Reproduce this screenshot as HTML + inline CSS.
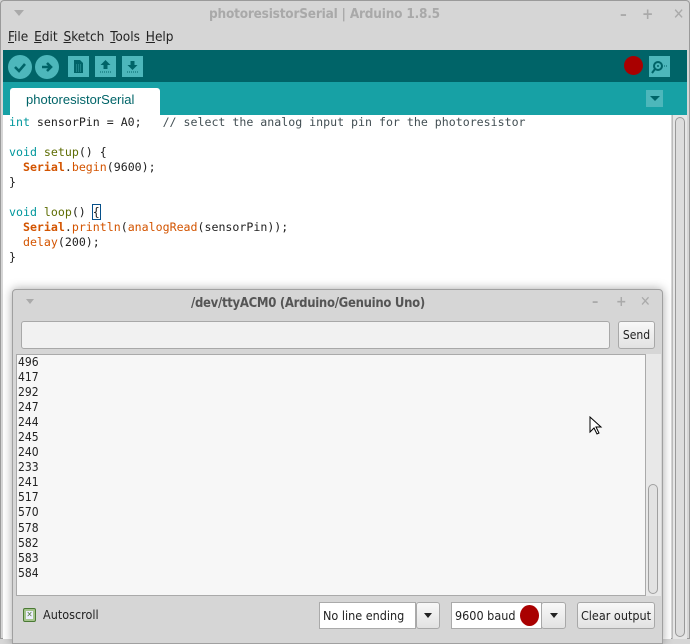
<!DOCTYPE html>
<html><head><meta charset="utf-8"><style>
*{margin:0;padding:0;box-sizing:border-box}
body{width:690px;height:639px;overflow:hidden;background:#d6d6d6;font-family:"DejaVu Sans Condensed","DejaVu Sans","Liberation Sans",sans-serif;position:relative}
.abs{position:absolute}
.mono{font-family:"DejaVu Sans Mono","Liberation Mono",monospace;font-size:11.6px;white-space:pre;color:#222}
.k{color:#00979c}.f{color:#5e6d03}.o{color:#d35400}.b{color:#d35400;font-weight:bold}.c{color:#434f54}
.btn{background:linear-gradient(#f8f8f8,#e2e2e2);border:1px solid #a8a8a8;border-radius:3px}
.tb{background:#4db7bb;}
</style></head><body>
<div class="abs" style="left:0;top:0;width:690px;height:639px;border:1px solid #9a9a9a;border-radius:4px 4px 0 0;"></div>
<div class="abs" style="left:14px;top:10px;width:0;height:0;border-left:5px solid transparent;border-right:5px solid transparent;border-top:6px solid #aaa"></div>
<div class="abs" style="left:209px;top:6px;font-size:13.5px;font-weight:bold;color:#a9a9a9;white-space:nowrap;letter-spacing:-0.2px">photoresistorSerial | Arduino 1.8.5</div>
<div class="abs" style="left:620px;top:5px;font-size:15px;color:#aaa;font-weight:bold">–</div>
<div class="abs" style="left:642px;top:5px;font-size:15px;color:#aaa;font-weight:bold">+</div>
<div class="abs" style="left:673px;top:5px;font-size:15px;color:#aaa;font-weight:bold">✕</div>
<div class="abs" style="left:8px;top:29px;font-size:13.5px;color:#222;word-spacing:2px;white-space:nowrap"><u>F</u>ile <u>E</u>dit <u>S</u>ketch <u>T</u>ools <u>H</u>elp</div>
<div class="abs" style="left:3px;top:50px;width:684px;height:32px;background:#006468"></div>
<div class="abs tb" style="left:8px;top:55px;width:24px;height:24px;border-radius:50%"></div>
<svg class="abs" style="left:8px;top:55px" width="24" height="24"><path d="M7 12l4 4 6-7" stroke="#006468" stroke-width="2.6" fill="none"/></svg>
<div class="abs tb" style="left:35px;top:55px;width:24px;height:24px;border-radius:50%"></div>
<svg class="abs" style="left:35px;top:55px" width="24" height="24"><path d="M7 12h8M12 8l4 4-4 4" stroke="#006468" stroke-width="2.6" fill="none"/></svg>
<div class="abs tb" style="left:68px;top:56px;width:21px;height:21px"></div>
<svg class="abs" style="left:68px;top:56px" width="21" height="21"><path d="M6 4h6l3 3v10H6z" fill="#006468"/><path d="M8 9h6M8 11h6M8 13h6M8 15h6" stroke="#4db7bb" stroke-width="0.8" stroke-dasharray="1 1"/></svg>
<div class="abs tb" style="left:95px;top:56px;width:21px;height:21px"></div>
<svg class="abs" style="left:95px;top:56px" width="21" height="21"><path d="M10.5 4l-5 5h3v4h4V9h3z" fill="#006468"/><path d="M5 16h11" stroke="#006468" stroke-dasharray="1 1"/></svg>
<div class="abs tb" style="left:122px;top:56px;width:21px;height:21px"></div>
<svg class="abs" style="left:122px;top:56px" width="21" height="21"><path d="M10.5 14l-5-5h3V5h4v4h3z" fill="#006468"/><path d="M5 16h11" stroke="#006468" stroke-dasharray="1 1"/></svg>
<div class="abs" style="left:624px;top:56px;width:19px;height:19px;border-radius:50%;background:#a90000"></div>
<div class="abs tb" style="left:649px;top:56px;width:21px;height:21px"></div>
<svg class="abs" style="left:649px;top:56px" width="21" height="21"><circle cx="9" cy="10" r="4" stroke="#006468" stroke-width="2" fill="none"/><path d="M6 13l-3 4" stroke="#006468" stroke-width="2"/><circle cx="9" cy="10" r="1" fill="#006468"/><path d="M15 10h3" stroke="#006468" stroke-dasharray="1 1"/></svg>
<div class="abs" style="left:3px;top:82px;width:684px;height:33px;background:#17a1a5"></div>
<div class="abs" style="left:10px;top:88px;width:150px;height:27px;background:#fff;border-radius:3px 3px 0 0;font-family:'Liberation Sans',sans-serif;font-size:13px;color:#006468;padding:4px 0 0 16px">photoresistorSerial</div>
<div class="abs" style="left:646px;top:90px;width:17px;height:17px;background:#4db7bb"></div>
<div class="abs" style="left:650px;top:96px;border-left:5px solid transparent;border-right:5px solid transparent;border-top:5px solid #006468"></div>
<div class="abs" style="left:3px;top:115px;width:668px;height:524px;background:#fff"></div>
<div class="abs" style="left:672px;top:115px;width:15px;height:524px;background:#e6e6e6;border-left:1px solid #bbb"></div>
<div class="abs" style="left:675px;top:117px;width:10px;height:520px;border:1px solid #999;border-radius:5px;background:#ddd"></div>
<div class="abs mono" style="left:9px;top:115px;line-height:15px"><span class="k">int</span> sensorPin = A0;   <span class="c">// select the analog input pin for the photoresistor</span>

<span class="k">void</span> <span class="f">setup</span>() {
  <span class="b">Serial</span>.<span class="o">begin</span>(9600);
}

<span class="k">void</span> <span class="f">loop</span>() <span style="outline:1px solid #06508a">{</span>
  <span class="b">Serial</span>.<span class="o">println</span>(<span class="o">analogRead</span>(sensorPin));
  <span class="o">delay</span>(200);
}</div>
<!-- serial monitor -->
<div class="abs" style="left:12px;top:289px;width:651px;height:355px;background:#d6d6d6;border:1px solid #a0a0a0;border-radius:4px 4px 0 0;box-shadow:0 0 10px rgba(0,0,0,0.35)"></div>
<div class="abs" style="left:26px;top:299px;border-left:4px solid transparent;border-right:4px solid transparent;border-top:5px solid #aaa"></div>
<div class="abs" style="left:191px;top:296px;font-size:13px;font-weight:bold;color:#555;white-space:nowrap;letter-spacing:-0.3px">/dev/ttyACM0 (Arduino/Genuino Uno)</div>
<div class="abs" style="left:592px;top:294px;font-size:14px;color:#aaa;font-weight:bold">–</div>
<div class="abs" style="left:616px;top:294px;font-size:14px;color:#aaa;font-weight:bold">+</div>
<div class="abs" style="left:640px;top:294px;font-size:14px;color:#aaa;font-weight:bold">✕</div>
<div class="abs" style="left:21px;top:321px;width:589px;height:28px;background:#f1f1f1;border:1px solid #a8a8a8;border-radius:3px"></div>
<div class="abs btn" style="left:618px;top:321px;width:37px;height:28px;font-size:12px;color:#222;text-align:center;line-height:26px">Send</div>
<div class="abs" style="left:16px;top:354px;width:630px;height:242px;background:#f7f7f7;border:1px solid #aaa"></div>
<div class="abs" style="left:646px;top:354px;width:15px;height:242px;background:#e8e8e8"></div>
<div class="abs" style="left:648px;top:484px;width:10px;height:110px;border:1px solid #a0a0a0;border-radius:5px;background:#e2e2e2"></div>
<div class="abs" style="left:18px;top:355px;font-size:12px;line-height:15.05px;color:#222">496<br>417<br>292<br>247<br>244<br>245<br>240<br>233<br>241<br>517<br>570<br>578<br>582<br>583<br>584</div>
<svg class="abs" style="left:589px;top:416px" width="14" height="20"><path d="M1 1v15l4-4 3 6 2-1-3-6h5z" fill="#fff" stroke="#000"/></svg>
<div class="abs" style="left:23px;top:608px;width:13px;height:14px;border:1px solid #4a7a34;background:#a6c58e;border-radius:2px"></div>
<div class="abs" style="left:26px;top:611px;width:7px;height:8px;background:#eef;font-size:8px;line-height:8px;color:#4a7a34;text-align:center">✕</div>
<div class="abs" style="left:43px;top:607px;font-size:12.5px;color:#222">Autoscroll</div>
<div class="abs" style="left:319px;top:602px;width:97px;height:27px;background:#fff;border:1px solid #aaa;font-size:12.5px;color:#222;padding:5px 3px">No line ending</div>
<div class="abs btn" style="left:416px;top:602px;width:24px;height:27px"></div>
<div class="abs" style="left:424px;top:613px;border-left:4px solid transparent;border-right:4px solid transparent;border-top:5px solid #222"></div>
<div class="abs" style="left:451px;top:602px;width:91px;height:27px;background:#fff;border:1px solid #aaa;font-size:12.5px;color:#222;padding:5px 3px">9600 baud</div>
<div class="abs" style="left:520px;top:605px;width:19px;height:21px;border-radius:50%;background:#a90000"></div>
<div class="abs btn" style="left:541px;top:602px;width:25px;height:27px"></div>
<div class="abs" style="left:550px;top:613px;border-left:4px solid transparent;border-right:4px solid transparent;border-top:5px solid #222"></div>
<div class="abs btn" style="left:577px;top:602px;width:78px;height:27px;font-size:12.5px;color:#222;text-align:center;line-height:25px">Clear output</div>
</body></html>
